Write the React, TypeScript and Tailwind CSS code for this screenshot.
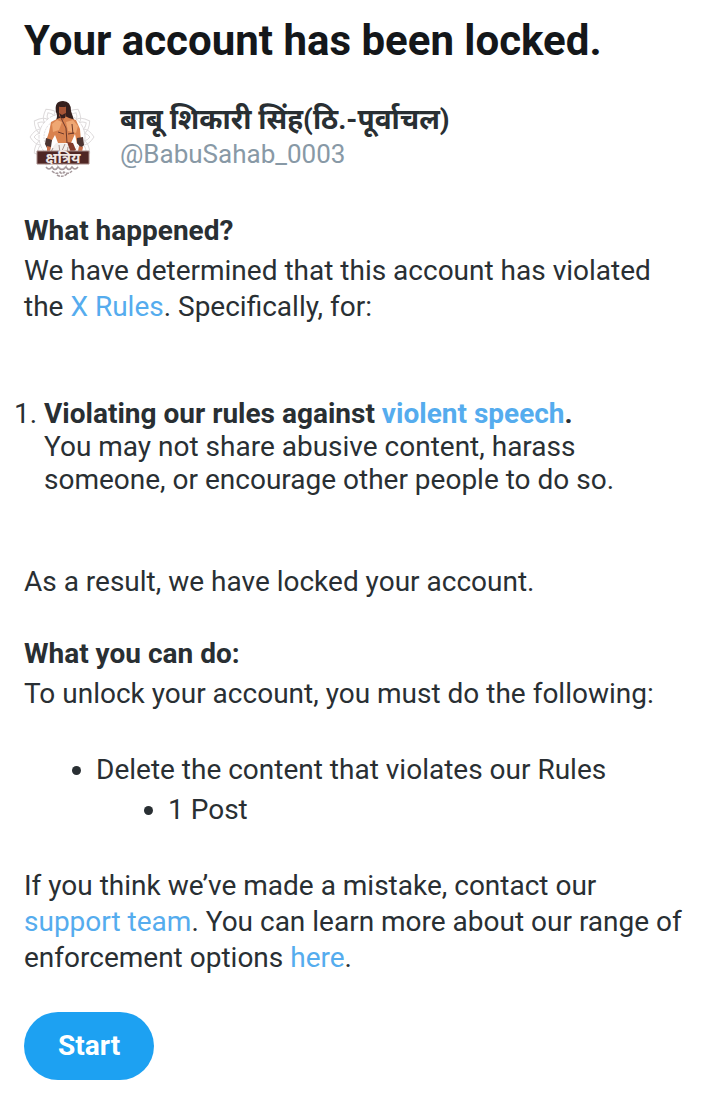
import React from 'react';

interface TextLinkProps {
  readonly href: string;
  readonly children: React.ReactNode;
}

interface AccountHeaderProps {
  readonly name: string;
  readonly handle: string;
}

const petalAngles = [0, 30, 60, 90, 120, 150, 180, 210, 240, 270, 300, 330];

const TextLink = ({ href, children }: TextLinkProps) => (
  <a href={href} className="text-[#55acee] hover:underline">
    {children}
  </a>
);

const Avatar = () => (
  <svg viewBox="0 0 72 80" className="h-20 w-18 shrink-0" role="img" aria-label="Profile picture">
    {/* Mandala */}
    <g fill="none" stroke="#dedbdc" strokeWidth="1">
      <circle cx="38" cy="40" r="23" strokeDasharray="4 1" />
      <circle cx="38" cy="40" r="18" strokeDasharray="2 1" />
      {petalAngles.map((angle) => (
        <path
          key={angle}
          d="M30 19q0-6 8-11q8 5 8 11M34 18q1-4 4-6q3 2 4 6"
          transform={`rotate(${angle} 38 40)`}
        />
      ))}
    </g>
    <g fill="none" stroke="#a5989b" strokeWidth="1.5">
      <path d="M22 70q3 4 6 0q3 5 6 0q4 5 8 0q3 5 6 0q3 4 6 0" />
      <path d="M28 74q4 4 8 1q2 3 4 0q4 3 8-1M33 78q5 3 10-1" strokeDasharray="3 1" />
    </g>
    {/* Figure */}
    <path d="M32 15q-2-11 7-11q8 0 8 10l3 9-5 1-9-2-4 1q2-4 0-8z" fill="#35201e" />
    <path d="M33 22l-6 3-2 10-3 9 4 3 5-9 3 8h13l4-9 2 10 4-2-1-13-4-9-7-2-4-2z" fill="#d9824f" />
    <path d="M35 9q4-3 7 0v10l-3 4-4-4z" fill="#a65536" />
    <path d="M34 9q4-4 9 0l-2 1h-5zM35 16l3 2 4-2-1 5h-4z" fill="#35201e" />
    <path d="M33 23l5 2-3 8-6 2-1-8zM42 25l7-2 5 6-2 7-8-2z" fill="#efa773" />
    <path d="M37 21l5 10 1 15M34 35l6 2M44 37l6-1M48 27l1 10" fill="none" stroke="#6d392b" />
    <path d="M22 41l6 2-1 7-4 1-2-4zM53 41l6-1 1 8-3 3-4-5z" fill="#4b3431" />
    <path d="M23 49l4 1-1 5-3-1zM55 49l4 1-1 5-4-1z" fill="#c9704a" />
    <path d="M32 46l16 1 5 9H24z" fill="#f3efed" />
    <path d="M35 48l1 8M41 47l-4 9M44 50l-1 6M29 51l-2 4" stroke="#a8948f" strokeWidth="1" />
    <path d="M43 45l6 1 3 7-5 3z" fill="#823b2c" />
    {/* Banner */}
    <path d="M13 54h52v13H13z" fill="#4f2624" stroke="#a88c88" strokeWidth="1" />
    <text
      x="39"
      y="66"
      textAnchor="middle"
      className="fill-[#f1e6e3] font-['Noto_Sans','Noto_Sans_Devanagari',sans-serif] text-[15px] font-bold"
    >
      क्षत्रिय
    </text>
  </svg>
);

const AccountHeader = ({ name, handle }: AccountHeaderProps) => (
  <div className="mt-8 flex items-center gap-6">
    <Avatar />
    <div className="min-w-0 pb-0.5">
      <p className="text-[28px] leading-9 font-bold">{name}</p>
      <p className="text-[26px] leading-8 text-[#8899a6]">{handle}</p>
    </div>
  </div>
);

export default function App() {
  return (
    <main className="bg-white pt-[17px] pr-7 pb-4 pl-6 font-[Roboto,'Noto_Sans',sans-serif] text-[28px] leading-9 text-[#292f33]">
      <h1 className="text-[42px] leading-12 font-bold text-[#14171a]">
        Your account has been locked.
      </h1>
      <AccountHeader name="बाबू शिकारी सिंह(ठि.-पूर्वाचल)" handle="@BabuSahab_0003" />

      <section className="mt-9">
        <h2 className="mb-1 font-bold">What happened?</h2>
        <p>
          We have determined that this account has violated the{' '}
          <TextLink href="#rules">X Rules</TextLink>. Specifically, for:
        </p>
        <ol className="mt-18 list-decimal pl-5 leading-[33px]">
          <li>
            <strong className="font-bold">
              Violating our rules against <TextLink href="#violent-speech">violent speech</TextLink>.
            </strong>
            <p>
              You may not share abusive content, harass someone, or encourage other people to do so.
            </p>
          </li>
        </ol>
        <p className="mt-17">As a result, we have locked your account.</p>
      </section>

      <section className="mt-9">
        <h2 className="mb-1 font-bold">What you can do:</h2>
        <p>To unlock your account, you must do the following:</p>
        <ul className="mt-10 list-disc pl-18">
          <li>
            Delete the content that violates our Rules
            <ul className="mt-1 list-disc pl-18">
              <li>1 Post</li>
            </ul>
          </li>
        </ul>
        <p className="mt-10">
          If you think we’ve made a mistake, contact our{' '}
          <TextLink href="#support">support team</TextLink>. You can learn more about our range of
          enforcement options <TextLink href="#enforcement">here</TextLink>.
        </p>
      </section>

      <button
        type="button"
        className="mt-9 cursor-pointer rounded-full bg-[#1da1f2] px-[34px] py-4 font-bold text-white"
      >
        Start
      </button>
    </main>
  );
}
